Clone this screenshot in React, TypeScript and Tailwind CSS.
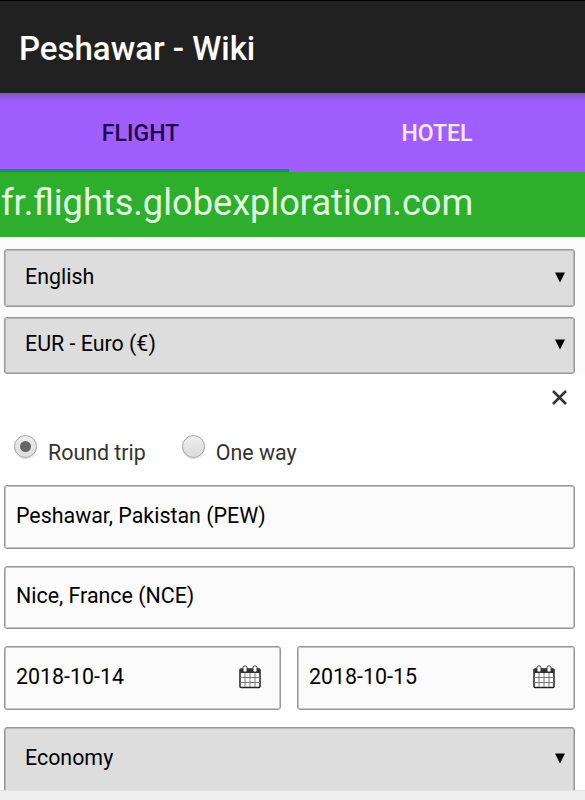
import { useState } from "react";

const TABS = ["FLIGHT", "HOTEL"];

export default function App() {
  const [tab, setTab] = useState("FLIGHT");
  const [trip, setTrip] = useState("Round trip");

  return (
    <div className="flex h-[800px] w-[585px] flex-col overflow-hidden bg-white font-[Roboto,sans-serif] text-black">
      <header className="flex h-[93px] shrink-0 items-center border-t border-black bg-[#212121] pl-[19px] pt-[4px]">
        <h1 className="text-[33px] font-medium leading-10 text-white">Peshawar - Wiki</h1>
      </header>

      <nav className="flex h-[79px] shrink-0 bg-[#a15eff] bg-[linear-gradient(#7e57b9,#8d5ad6_3px,#a15eff_9px)]">
        {TABS.map((t) => (
          <button
            key={t}
            onClick={() => setTab(t)}
            className={`flex items-center justify-center border-b-[3px] pt-[6px] text-[23px] font-medium leading-6 ${
              t === "FLIGHT" ? "w-[289px] pr-[8px]" : "flex-1"
            } ${
              tab === t
                ? "border-[#178a86] text-[#1e0648]"
                : "border-transparent text-[#fdeaff]"
            }`}
          >
            {t}
          </button>
        ))}
      </nav>

      <div className="h-[65px] shrink-0 whitespace-nowrap bg-[#2dae2d] pl-px pt-[9px] text-[36.2px] leading-[44px] text-[#e2ffe0]">
        fr.flights.globexploration.com
      </div>

      <main className="flex min-h-0 flex-1 flex-col overflow-hidden">
        <div className="flex flex-col gap-[10px] bg-[#fbfbfb] pl-1 pr-[10px] pt-[12px]">
          <Select value="English" />
          <Select value="EUR - Euro (€)" />
        </div>

        <div className="flex h-[47px] shrink-0 justify-end pr-[18px] pt-[16px]">
          <svg width="15" height="15" viewBox="0 0 15 15" stroke="#333" strokeWidth="2.6">
            <path d="M1 1l13 13M14 1L1 14" />
          </svg>
        </div>

        <div className="flex h-[64px] shrink-0 gap-[36px] pl-[14px] pt-[14px]">
          <Radio label="Round trip" selected={trip} onSelect={setTrip} />
          <Radio label="One way" selected={trip} onSelect={setTrip} />
        </div>

        <div className="flex flex-col gap-[17px] pl-1 pr-[10px]">
          <Field value="Peshawar, Pakistan (PEW)" />
          <Field value="Nice, France (NCE)" />
          <div className="grid grid-cols-[277px_278px] gap-[16px]">
            <Field value="2018-10-14" date />
            <Field value="2018-10-15" date />
          </div>
          <Select value="Economy" tall />
        </div>
      </main>

      <footer className="h-[10px] shrink-0 border-t border-[#e3e3e3] bg-[#efefef]" />
    </div>
  );
}

function Select({ value, tall }: { value: string; tall?: boolean }) {
  return (
    <div
      className={`flex shrink-0 justify-between rounded-[3px] border border-[#979797] bg-[#ddd] pl-[20px] pr-[9px] text-[21.4px] leading-7 shadow-[inset_0_0_0_1px_#b8b8b8] ${
        tall ? "h-[70px] pt-[16px]" : "h-[57.5px] pt-[12.5px]"
      }`}
    >
      <span>{value}</span>
      <svg className="mt-[9px]" width="10" height="11" viewBox="0 0 10 11">
        <path d="M0 .5h10L5 10.5z" />
      </svg>
    </div>
  );
}

function Field({ value, date }: { value: string; date?: boolean }) {
  return (
    <div className="flex h-[63.5px] shrink-0 justify-between rounded-[3px] border border-[#979797] bg-[#fbfbfb] pl-[11px] pr-[19px] pt-[15.5px] text-[21.4px] leading-7 shadow-[inset_0_0_0_1px_#c4c4c4]">
      <span>{value}</span>
      {date && <CalendarIcon />}
    </div>
  );
}

function Radio({
  label,
  selected,
  onSelect,
}: {
  label: string;
  selected: string;
  onSelect: (v: string) => void;
}) {
  return (
    <button
      className="flex items-start gap-[11px] text-[21.4px] leading-7 text-[#333]"
      onClick={() => onSelect(label)}
    >
      <span className="flex h-[23px] w-[23px] items-center justify-center rounded-full border border-[#a5a5a5] bg-linear-to-b from-[#eee] to-[#dcdcdc] shadow-[0_1px_1px_#ddd]">
        {selected === label && (
          <span className="h-[11px] w-[11px] rounded-full bg-[#666]" />
        )}
      </span>
      <span className="mt-[4px]">{label}</span>
    </button>
  );
}

function CalendarIcon() {
  return (
    <svg className="mt-[2px] shrink-0" width="22" height="24" viewBox="0 0 22 24" fill="none">
      <rect x="1" y="4" width="20" height="18.5" rx="1" fill="#fff" stroke="#222" strokeWidth="1.5" />
      <path d="M1 4h20v4H1z" fill="#333" />
      <path d="M6 8v14M11 8v14M16 8v14M1 12.5h20M1 17.5h20" stroke="#777" />
      <rect x="4" y="1" width="4" height="6" rx="1.5" fill="#fff" stroke="#333" />
      <rect x="14" y="1" width="4" height="6" rx="1.5" fill="#fff" stroke="#333" />
    </svg>
  );
}
